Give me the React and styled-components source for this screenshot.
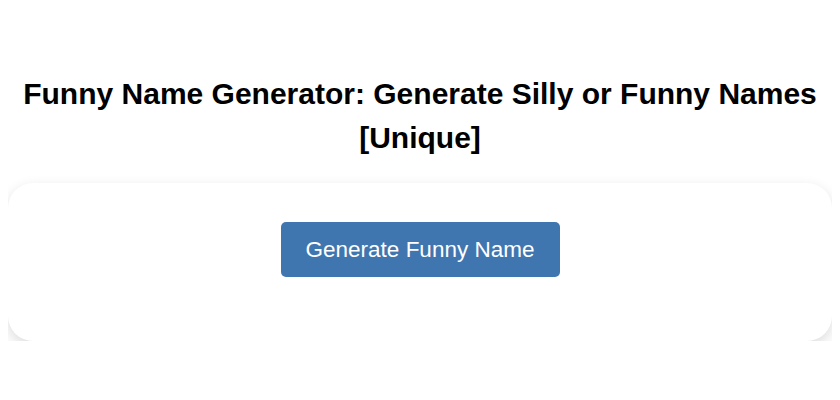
import React, { useState } from 'react';
import styled, { createGlobalStyle } from 'styled-components';

const names = [
  'Sir Wobblebottom',
  'Captain Noodlehead',
  'Fluffy McSnugglepants',
  'Baron Von Pickles',
  'Duchess Snickerdoodle',
];

const App = () => {
  const [name, setName] = useState('');

  const generate = () => {
    setName(names[Math.floor(Math.random() * names.length)]);
  };

  return (
    <Page>
      <GlobalStyle />
      <Title>Funny Name Generator: Generate Silly or Funny Names [Unique]</Title>
      <Card>
        <Button onClick={generate}>Generate Funny Name</Button>
        <Result>{name}</Result>
      </Card>
    </Page>
  );
};

export default App;

const GlobalStyle = createGlobalStyle`
  body {
    margin: 8px;
    background: #ffffff;
    font-family: "Liberation Sans", Arial, sans-serif;
  }
`

const Page = styled.div`
  display: flex;
  flex-direction: column;
  padding-top: 64px;
`

const Title = styled.h1`
  margin: 0 0 23px;
  padding: 0 8px;
  text-align: center;
  font-size: 30px;
  line-height: 44px;
  font-weight: bold;
  color: #000;
`

const Card = styled.div`
  display: flex;
  flex-direction: column;
  align-items: center;
  background: #fff;
  border-radius: 25px;
  padding: 39px 20px 0;
  height: 158px;
  box-sizing: border-box;
  box-shadow: 0 5px 14px rgba(0, 0, 0, 0.14);
`

const Button = styled.button`
  width: 279px;
  height: 55px;
  border: none;
  border-radius: 5px;
  background: #4076b0;
  color: #fff;
  font-family: "Liberation Sans", Arial, sans-serif;
  font-size: 22.5px;
  cursor: pointer;
`

const Result = styled.div`
  margin-top: 12px;
  font-size: 20px;
  color: #333;
`
